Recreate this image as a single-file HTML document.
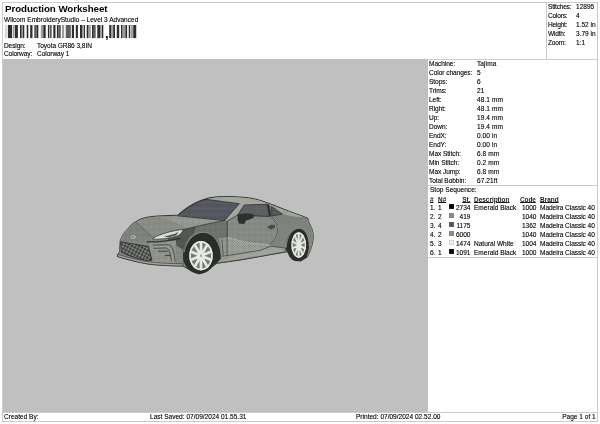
<!DOCTYPE html>
<html><head><meta charset="utf-8"><title>Production Worksheet</title>
<style>
html,body{margin:0;padding:0;background:#fff;}
body{width:600px;height:424px;position:relative;overflow:hidden;font-family:"Liberation Sans",sans-serif;color:#1a1a1a;}
.t{position:absolute;will-change:transform;text-shadow:0 0 0.5px rgba(0,0,0,0.4);-webkit-text-stroke:0.07px #1a1a1a;white-space:nowrap;font-size:6.55px;line-height:9px;height:9px;}
.h{position:absolute;background:#cbcbcb;height:1px;}
.v{position:absolute;background:#cbcbcb;width:1px;}
#title{position:absolute;will-change:transform;left:4.7px;top:2.9px;font-size:9.75px;line-height:12px;letter-spacing:-0.07px;transform-origin:0 0;font-weight:bold;color:#000;white-space:nowrap;}
#canvas{position:absolute;left:3px;top:59px;width:424.7px;height:352.9px;background:#c0c0c0;}
.sw{position:absolute;width:5.2px;height:5.2px;box-shadow:inset 0 0 0 0.5px rgba(120,120,130,0.35);}
u{text-decoration:underline;text-decoration-thickness:0.65px;text-underline-offset:0.1px;}
.b{font-weight:bold;-webkit-text-stroke:0;text-shadow:none;font-size:6.45px;}
.l{letter-spacing:-0.11px;}
.l2{letter-spacing:-0.2px;}
.l3{letter-spacing:-0.05px;}
.v3{letter-spacing:0.08px;}
.r{text-align:right;}
</style></head><body>
<!-- frame -->
<div class="h" style="left:2px;top:2px;width:596px"></div>
<div class="h" style="left:2px;top:421px;width:596px"></div>
<div class="v" style="left:2px;top:2px;height:420px"></div>
<div class="v" style="left:597px;top:2px;height:420px"></div>
<div class="v" style="left:546px;top:2px;height:57px"></div>
<div class="h" style="left:427px;top:59px;width:170px"></div>
<div class="h" style="left:427px;top:185px;width:170px"></div>
<div class="h" style="left:427px;top:257px;width:170px"></div>
<div class="h" style="left:2px;top:411.9px;width:596px"></div>

<div id="title">Production Worksheet</div>
<div class="t" style="left:4.4px;top:14.75px">Wilcom EmbroideryStudio – Level 3 Advanced</div>
<svg id="barcode" style="position:absolute;left:5px;top:25px" width="133" height="16" viewBox="0 0 133 16"><g fill="#111"><rect x="0.40" y="0" width="1.10" height="13.1" opacity="0.3"/><rect x="2.90" y="0" width="4.20" height="13.1" opacity="0.88"/><rect x="7.90" y="0" width="1.70" height="13.1" opacity="0.42"/><rect x="10.00" y="0" width="2.90" height="13.1" opacity="0.88"/><rect x="15.00" y="0" width="1.50" height="13.1" opacity="0.88"/><rect x="16.50" y="0" width="1.40" height="13.1" opacity="0.42"/><rect x="17.90" y="0" width="1.40" height="13.1" opacity="0.88"/><rect x="21.70" y="0" width="1.60" height="13.1" opacity="0.88"/><rect x="25.20" y="0" width="2.30" height="13.1" opacity="0.88"/><rect x="29.20" y="0" width="2.50" height="13.1" opacity="0.68"/><rect x="31.70" y="0" width="1.60" height="13.1" opacity="0.88"/><rect x="35.80" y="0" width="2.50" height="13.1" opacity="0.42"/><rect x="38.30" y="0" width="2.40" height="13.1" opacity="0.88"/><rect x="42.90" y="0" width="1.50" height="13.1" opacity="0.88"/><rect x="45.00" y="0" width="1.70" height="13.1" opacity="0.68"/><rect x="48.30" y="0" width="1.70" height="13.1" opacity="0.88"/><rect x="50.00" y="0" width="1.20" height="13.1" opacity="0.42"/><rect x="52.00" y="0" width="1.30" height="13.1" opacity="0.88"/><rect x="53.30" y="0" width="2.50" height="13.1" opacity="0.68"/><rect x="57.00" y="0" width="2.20" height="13.1" opacity="0.42"/><rect x="60.80" y="0" width="5.00" height="13.1" opacity="0.68"/><rect x="66.80" y="0" width="2.20" height="13.1" opacity="0.88"/><rect x="70.80" y="0" width="2.10" height="13.1" opacity="0.88"/><rect x="75.00" y="0" width="2.00" height="13.1" opacity="0.88"/><rect x="77.00" y="0" width="1.30" height="13.1" opacity="0.42"/><rect x="78.70" y="0" width="1.30" height="13.1" opacity="0.88"/><rect x="81.70" y="0" width="1.50" height="13.1" opacity="0.88"/><rect x="83.20" y="0" width="2.60" height="13.1" opacity="0.42"/><rect x="87.00" y="0" width="1.70" height="13.1" opacity="0.88"/><rect x="88.70" y="0" width="2.00" height="13.1" opacity="0.68"/><rect x="92.30" y="0" width="2.70" height="13.1" opacity="0.88"/><rect x="95.00" y="0" width="1.50" height="13.1" opacity="0.42"/><rect x="96.80" y="0" width="1.50" height="13.1" opacity="0.88"/><rect x="104.20" y="0" width="1.80" height="13.1" opacity="0.88"/><rect x="106.00" y="0" width="1.90" height="13.1" opacity="0.42"/><rect x="108.20" y="0" width="1.80" height="13.1" opacity="0.88"/><rect x="111.80" y="0" width="2.40" height="13.1" opacity="0.88"/><rect x="116.00" y="0" width="1.30" height="13.1" opacity="0.88"/><rect x="117.30" y="0" width="3.10" height="13.1" opacity="0.42"/><rect x="120.40" y="0" width="1.70" height="13.1" opacity="0.88"/><rect x="123.75" y="0" width="1.45" height="13.1" opacity="0.88"/><rect x="125.80" y="0" width="2.10" height="13.1" opacity="0.42"/><rect x="128.20" y="0" width="3.05" height="13.1" opacity="0.88"/></g><text x="99.9" y="12.6" font-family="Liberation Sans, sans-serif" font-weight="bold" font-size="13.5" fill="#111">,</text></svg>
<div class="t l" style="left:4.4px;top:40.7px">Design:</div><div class="t" style="left:37px;top:40.7px;letter-spacing:-0.05px">Toyota GR86 3,8IN</div>
<div class="t l" style="left:4.4px;top:49.2px">Colorway:</div><div class="t" style="left:37px;top:49.2px;letter-spacing:-0.05px">Colorway 1</div>

<div class="t l2" style="left:547.7px;top:2.3px" >Stitches:</div><div class="t" style="left:575.9px;top:2.3px">12895</div>
<div class="t l2" style="left:547.7px;top:11.3px" >Colors:</div><div class="t" style="left:575.9px;top:11.3px">4</div>
<div class="t l2" style="left:547.7px;top:20.3px" >Height:</div><div class="t" style="left:575.9px;top:20.3px">1.52 in</div>
<div class="t l2" style="left:547.7px;top:29.3px" >Width:</div><div class="t" style="left:575.9px;top:29.3px">3.79 in</div>
<div class="t l2" style="left:547.7px;top:38.3px" >Zoom:</div><div class="t" style="left:575.9px;top:38.3px">1:1</div>

<div id="canvas"></div>
<svg style="position:absolute;left:0;top:0" width="600" height="424" viewBox="0 0 600 424">
<defs>
<pattern id="hatch" width="1.4" height="1.4" patternUnits="userSpaceOnUse" patternTransform="rotate(45)"><rect width="0.7" height="0.7" fill="#2a2c2a" opacity="0.42"/></pattern>
<pattern id="hatch2" width="1.2" height="1.2" patternUnits="userSpaceOnUse" patternTransform="rotate(45)"><rect width="0.6" height="0.6" fill="#2a2c2a" opacity="0.30"/></pattern>
<pattern id="mesh" width="3.2" height="3.2" patternUnits="userSpaceOnUse" patternTransform="rotate(28)"><rect width="3.2" height="3.2" fill="#8a8e88"/><rect x="0.45" y="0.45" width="2.3" height="2.3" rx="0.7" fill="#343634"/></pattern>
<pattern id="glass" width="3" height="1.2" patternUnits="userSpaceOnUse"><rect width="3" height="0.5" fill="#000" opacity="0.12"/></pattern>
</defs>
<g stroke-linejoin="round" stroke-linecap="round">
<!-- body silhouette -->
<path d="M117.7,255.3 L119.7,251.5 L120.2,241 C122,235 125,231 128.3,228.5 C131,225 133,223 136.3,221.5 C139,219.5 142,218.5 145.7,217.5 C150,216.6 154,216.2 157.7,216 L177.7,215.2 C186,207.5 196,201.5 206,198.8 C208,198 209,197.8 210.5,197.6 C215,197 219,196.7 223.3,196.6 C232,196.5 241,197 248.3,197.8 C253,198.5 258,199.6 261.7,200.8 L275,205.7 L288.3,211 L297.7,214.4 L304.3,216.8 L307.9,218.4 C308.3,220 308.6,221 309,222.5 C310.8,226 312.2,229 312.8,232 C313.5,236 313.2,240 312.3,244 C311,249 309,254 307,257.3 L300,261.3 L290,252 L285.3,252 L266.7,255.3 L240,260 L216.7,263.3 L208,270 L199.3,273.9 L190,270 L183,266 L175,265.8 C165,265.6 155,265 147,263.8 C137,262 127,259.5 117.7,256.6 Z" fill="#858983" stroke="#303230" stroke-width="1"/>
<!-- roof + pillars light -->
<path d="M206,199.4 C212,197.8 219,197.2 223.3,197.1 C232,197 241,197.5 248.3,198.3 C253,199 258,200 261.7,201.2 L275,206.2 L288.3,211.5 L282.3,214 L271.7,206.5 L267,204 L244,204.8 L237.7,214.7 L227.6,221 L224.7,220.3 L239.3,203.7 Z" fill="#a3a69f"/>
<!-- hood -->
<path d="M120.5,240 C122,235 125,231 128.3,229 C131,225.5 133,223.5 136.3,222 C139,220 142,219 145.7,218 C150,217.1 154,216.7 157.7,216.5 L178,215.7 L224.7,220.3 C212,223 196,226.5 183,229.7 C172,231 162,234 153.7,237.7 C142,240.5 130,241.5 120.5,241.3 Z" fill="#90948d"/>
<path d="M120.5,240 C122,235 125,231 128.3,229 C131,225.5 133,223.5 136.3,222.3 L153.7,238 C142,240.5 130,241.5 120.5,241.3 Z" fill="#848882"/>
<path d="M160,217.5 L178,216.3 L222,220.6 C210,223 198,225.5 188,228 C180,224 170,220 160,217.5 Z" fill="#9ea19a"/>
<path d="M136.3,222.3 L153.7,238" stroke="#5a5d5a" stroke-width="0.6" fill="none"/>
<!-- front fender (near side) -->
<path d="M224.7,220.3 C212,223 196,226.5 183,229.7 L177.5,235 L166,238.3 L158,239.5 L152,247 L153,259 L175,264.5 L183,265.5 L184,250 C188,236 206,228 215,238 C220,245 221.5,255 221,262.5 L227.6,255.5 L227.6,221 Z" fill="#747873"/>
<path d="M183,229.7 L177.5,235 L166,238.3 L183,250 L186,243 C188,238 191,235 194,233.2 L196,226.6 C192,227.5 187,228.7 183,229.7 Z" fill="#565956"/>
<!-- fender lower light -->
<path d="M218,238.5 L227.6,237.5 L227.6,255.5 L221.5,258 C221.5,250 220.5,243 218,238.5 Z" fill="#9a9d96"/>
<path d="M222,240 L223.3,255" stroke="#444644" stroke-width="0.7" fill="none"/>
<!-- bumper face -->
<path d="M120.3,241.3 C130,241.5 142,240.5 153.7,238 L166,238.3 L183,250 L183,265.5 L175,265.3 C165,265 155,264.5 147,263.3 C137,261.5 127,259 117.9,256 L119.7,251.5 Z" fill="#8b8f88"/>
<path d="M149,242.3 L176,240.2 L176.5,264.3 C166,264 158,263.3 152.5,262 Z" fill="#979b94"/>
<path d="M153.3,245.2 L168.3,244.7 C172,245.2 174,249.9 175.1,261.3 M153.8,248.3 L165.7,248 C168.9,248.3 170.4,253 171.5,260.8" stroke="#3a3c3a" stroke-width="0.75" fill="none"/>
<path d="M158.5,251.2 L167.3,251.2 M165.2,255.4 L170.6,255.4" stroke="#3a3c3a" stroke-width="0.9" fill="none"/>
<path d="M153.5,246.8 L167,246.4 C170.5,247 172,252 173.2,261" stroke="#b4b7b0" stroke-width="0.9" fill="none" opacity="0.8"/>

<!-- lip -->
<path d="M117.8,254.4 C127,257.3 137,259.8 147,261.6 C155,262.8 165,263.4 175,263.6 L183,263.8 L183,266 L175,265.8 C165,265.6 155,265 147,263.8 C137,262 127,259.5 117.7,256.6 Z" fill="#a6a9a2" stroke="#303230" stroke-width="0.6"/>
<!-- grille -->
<path d="M121,241.9 L148.3,246.4 L152,260.2 L148.5,260.8 C138,259 129,256 121.7,252.6 Z" fill="url(#mesh)" stroke="#2f312f" stroke-width="0.9"/>
<!-- headlight -->
<path d="M153.5,237.9 C160,234 172,230.6 183.4,229.4 C182,233 179.5,235 177,236 C169,238.5 161,239.4 153.5,239.2 Z" fill="#e8ece4" stroke="#303230" stroke-width="0.7"/>
<path d="M164,236.8 L175,233.8 L179,231.6 L176,235.2 L168.5,237.3 Z" fill="#4e514e"/>
<path d="M147,241.9 C158,242.1 170,240.6 180,238.3" stroke="#303230" stroke-width="1.2" fill="none"/>
<!-- emblem -->
<ellipse cx="133" cy="237" rx="2" ry="1.7" fill="#8b8f89" stroke="#d4d8d0" stroke-width="0.7"/>
<!-- hood near edge line -->
<path d="M183.2,229.6 C196,226.5 212,223 224.7,220.4" stroke="#3f413f" stroke-width="0.8" fill="none"/>
<!-- door -->
<path d="M227.6,221 L237.7,214.9 L269.7,216.2 C274,219 277,223 277.7,230 C277.6,235 275,239.5 271,243.3 L260,250.3 L240,253.7 L227.6,255.5 Z" fill="#8d918b" stroke="#303230" stroke-width="0.7"/>
<path d="M227.6,237.6 L250,243 L271,245 L260,250.3 L240,253.7 L227.6,255.5 Z" fill="#a1a49d"/>
<path d="M227.6,237.6 L250,243 L271,245" stroke="#d9dcd5" stroke-width="0.5" stroke-dasharray="1.6 1.1" fill="none"/>
<!-- rear fender -->
<path d="M269.7,216.2 L272.3,216 L282.3,214 L288.3,211.3 L297.7,214.8 L304.3,217.2 L307.7,218.8 C308.3,220 308.6,221 309,222.5 C310.8,226 312.2,229 312.8,232 C313.5,236 313.2,240 312.3,244 C311,249 309,254 307,257.3 L290,251.5 L285.3,251.5 L271,246.5 L271,243.3 C275,239.5 277.6,235 277.7,230 C277,223 274,219 269.7,216.2 Z" fill="#858983"/>
<!-- skirt -->
<path d="M218,256.6 L227.6,255.5 L240,253.7 L260,250.3 L271,246.3 L285.3,248 L285.3,251.8 L266.7,255.2 L240,259.8 L216.7,263.2 Z" fill="#a0a39c" stroke="#303230" stroke-width="0.6"/>
<!-- textures -->
<path d="M269.7,216.2 L288.3,211.3 L307.7,218.8 C312,228 313.5,240 306.7,257 L285.3,251.5 L271,246 C278,238 279,224 269.7,216.2 Z" fill="url(#hatch)"/>
<path d="M120.5,240 C125,230 135,220 157.7,216.5 L178,215.7 L224.7,220.3 L227.6,221 L237.7,214.9 L269.7,216.2 C279,224 278,238 271,246 L240,253.7 L221,262 L183,265.5 L117.9,256 Z" fill="url(#hatch2)"/>
<path d="M282.3,214 L288.3,211.5 L297.7,214.9 L304.3,217.3 L296,216.8 L289,215.6 Z" fill="#a3a69f"/>
<!-- windshield -->
<path d="M178,215.6 C186,208 196,202 206,199.3 L239.3,203.7 L224.7,220.3 Z" fill="#5a5c64" stroke="#303230" stroke-width="0.8"/>
<path d="M178,215.6 C186,208 196,202 206,199.3 L239.3,203.7 L224.7,220.3 Z" fill="url(#glass)"/>
<!-- side windows -->
<path d="M237.7,214.9 L244.3,205 L267.3,204.3 L269.5,216 Z" fill="#5d5f66" stroke="#303230" stroke-width="0.8"/>
<path d="M271.7,206.7 L282.3,214 L272.3,216 Z" fill="#56585f" stroke="#303230" stroke-width="0.8"/>
<path d="M267.3,204.3 L269.2,204.9 L271.2,216 L269.5,216 Z" fill="#2f312f" stroke="#2f312f" stroke-width="0.6"/>
<!-- mirror -->
<path d="M237.7,215.3 C239,213.8 246,213 252.3,214 C253.8,214.8 254,216.8 253.5,218 L245.7,220.7 L244.4,224 L239,223.4 L237.6,219.5 Z" fill="#2e302e"/>
<!-- handle -->
<path d="M267,226.8 L271.5,224.8 L275,225 L275,228 L270.5,229.4 Z" fill="#4a4c4a"/>
<!-- front wheel -->
<path d="M183.5,262 C182,246 192,232.5 203,232.2 C213,232 221,242 221.3,258 L218,262 L207,270 L199.3,273.9 L190,270 Z" fill="#2b2d2b"/>
<ellipse cx="199.3" cy="255.3" rx="16.2" ry="18.6" fill="#2b2d2b"/>
<path d="M184,252 C187,238 196,232 204,232.3 C214,233 221,243 221.3,258" stroke="#8d918b" stroke-width="0.9" fill="none"/>
<ellipse cx="201" cy="255.7" rx="11.7" ry="14.7" fill="#777b76"/>
<g stroke="#e6ebe2" stroke-width="2.7" stroke-linecap="butt">
<path d="M201,255.7 L201,241.5 M201,255.7 L201,270 M201,255.7 L190,251.2 M201,255.7 L212,251.2 M201,255.7 L190,260.2 M201,255.7 L212,260.2 M201,255.7 L194.2,243.8 M201,255.7 L207.8,243.8 M201,255.7 L194.2,267.6 M201,255.7 L207.8,267.6"/>
</g>
<ellipse cx="201" cy="255.7" rx="10.9" ry="13.9" fill="none" stroke="#e6ebe2" stroke-width="1.7"/>
<ellipse cx="201" cy="255.7" rx="2.6" ry="3.2" fill="#e6ebe2"/>
<ellipse cx="201" cy="255.7" rx="1" ry="1.3" fill="#9a9e98"/>
<!-- rear wheel -->
<path d="M286,250 C286,238 292,228.5 299,228.3 C305,228.3 309.5,236 309,248 L306.7,257 L300,261.3 L290,254 Z" fill="#2b2d2b"/>
<ellipse cx="297.3" cy="245.6" rx="11" ry="15.6" fill="#2b2d2b"/>
<path d="M286.2,247 C287,236 292,228.6 299,228.3 C305,228.3 309.5,236 309.3,246" stroke="#8d918b" stroke-width="0.8" fill="none"/>
<ellipse cx="298.7" cy="245" rx="7.3" ry="12.7" fill="#777b76"/>
<g stroke="#e6ebe2" stroke-width="1.9" stroke-linecap="butt">
<path d="M298.7,245 L298.7,232.8 M298.7,245 L298.7,257.2 M298.7,245 L291.8,241.2 M298.7,245 L305.6,241.2 M298.7,245 L291.8,248.8 M298.7,245 L305.6,248.8 M298.7,245 L294.5,234.8 M298.7,245 L302.9,234.8 M298.7,245 L294.5,255.2 M298.7,245 L302.9,255.2"/>
</g>
<ellipse cx="298.7" cy="245" rx="6.7" ry="12" fill="none" stroke="#e6ebe2" stroke-width="1.4"/>
<ellipse cx="298.7" cy="245" rx="1.8" ry="2.8" fill="#e6ebe2"/>
</g>
</svg>


<div class="t l3" style="left:429.4px;top:58.75px;">Machine:</div>
<div class="t v3" style="left:477.3px;top:58.75px;">Tajima</div>
<div class="t l3" style="left:429.4px;top:67.75px;">Color changes:</div>
<div class="t v3" style="left:477.3px;top:67.75px;">5</div>
<div class="t l3" style="left:429.4px;top:76.75px;">Stops:</div>
<div class="t v3" style="left:477.3px;top:76.75px;">6</div>
<div class="t l3" style="left:429.4px;top:85.75px;">Trims:</div>
<div class="t v3" style="left:477.3px;top:85.75px;">21</div>
<div class="t l3" style="left:429.4px;top:94.75px;">Left:</div>
<div class="t v3" style="left:477.3px;top:94.75px;">48.1 mm</div>
<div class="t l3" style="left:429.4px;top:103.75px;">Right:</div>
<div class="t v3" style="left:477.3px;top:103.75px;">48.1 mm</div>
<div class="t l3" style="left:429.4px;top:112.75px;">Up:</div>
<div class="t v3" style="left:477.3px;top:112.75px;">19.4 mm</div>
<div class="t l3" style="left:429.4px;top:121.75px;">Down:</div>
<div class="t v3" style="left:477.3px;top:121.75px;">19.4 mm</div>
<div class="t l3" style="left:429.4px;top:130.75px;">EndX:</div>
<div class="t v3" style="left:477.3px;top:130.75px;">0.00 in</div>
<div class="t l3" style="left:429.4px;top:139.75px;">EndY:</div>
<div class="t v3" style="left:477.3px;top:139.75px;">0.00 in</div>
<div class="t l3" style="left:429.4px;top:148.75px;">Max Stitch:</div>
<div class="t v3" style="left:477.3px;top:148.75px;">6.8 mm</div>
<div class="t l3" style="left:429.4px;top:157.75px;">Min Stitch:</div>
<div class="t v3" style="left:477.3px;top:157.75px;">0.2 mm</div>
<div class="t l3" style="left:429.4px;top:166.75px;">Max Jump:</div>
<div class="t v3" style="left:477.3px;top:166.75px;">6.8 mm</div>
<div class="t l3" style="left:429.4px;top:175.75px;">Total Bobbin:</div>
<div class="t v3" style="left:477.3px;top:175.75px;">67.21ft</div>
<div class="t " style="left:429.5px;top:184.7px;">Stop Sequence:</div>
<div class="t b" style="left:429.5px;top:194.6px;"><u>#</u></div>
<div class="t b" style="left:438px;top:194.6px;"><u>N#</u></div>
<div class="t b r" style="left:440px;top:194.6px;width:30.5px"><u>St.</u></div>
<div class="t b" style="left:474px;top:194.6px;"><u>Description</u></div>
<div class="t b" style="left:520.2px;top:194.6px;letter-spacing:-0.08px"><u>Code</u></div>
<div class="t b" style="left:539.7px;top:194.6px;"><u>Brand</u></div>
<div class="t " style="left:429.5px;top:203.0px;">1.</div>
<div class="t " style="left:438px;top:203.0px;">1</div>
<div class="sw" style="left:449px;top:203.90px;background:#000000"></div>
<div class="t r" style="left:440px;top:203.0px;width:30.5px">2734</div>
<div class="t " style="left:474px;top:203.0px;">Emerald Black</div>
<div class="t r" style="left:506px;top:203.0px;width:30.5px">1000</div>
<div class="t " style="left:539.8px;top:203.0px;letter-spacing:-0.05px">Madeira Classic 40</div>
<div class="t " style="left:429.5px;top:212.0px;">2.</div>
<div class="t " style="left:438px;top:212.0px;">2</div>
<div class="sw" style="left:449px;top:212.90px;background:#8a8a8a"></div>
<div class="t r" style="left:440px;top:212.0px;width:30.5px">419</div>
<div class="t r" style="left:506px;top:212.0px;width:30.5px">1040</div>
<div class="t " style="left:539.8px;top:212.0px;letter-spacing:-0.05px">Madeira Classic 40</div>
<div class="t " style="left:429.5px;top:221.0px;">3.</div>
<div class="t " style="left:438px;top:221.0px;">4</div>
<div class="sw" style="left:449px;top:221.90px;background:#5a506e"></div>
<div class="t r" style="left:440px;top:221.0px;width:30.5px">1175</div>
<div class="t r" style="left:506px;top:221.0px;width:30.5px">1362</div>
<div class="t " style="left:539.8px;top:221.0px;letter-spacing:-0.05px">Madeira Classic 40</div>
<div class="t " style="left:429.5px;top:230.0px;">4.</div>
<div class="t " style="left:438px;top:230.0px;">2</div>
<div class="sw" style="left:449px;top:230.90px;background:#8a8a8a"></div>
<div class="t r" style="left:440px;top:230.0px;width:30.5px">6000</div>
<div class="t r" style="left:506px;top:230.0px;width:30.5px">1040</div>
<div class="t " style="left:539.8px;top:230.0px;letter-spacing:-0.05px">Madeira Classic 40</div>
<div class="t " style="left:429.5px;top:239.0px;">5.</div>
<div class="t " style="left:438px;top:239.0px;">3</div>
<div class="sw" style="left:449px;top:239.90px;background:#ececf4"></div>
<div class="t r" style="left:440px;top:239.0px;width:30.5px">1474</div>
<div class="t " style="left:474px;top:239.0px;">Natural White</div>
<div class="t r" style="left:506px;top:239.0px;width:30.5px">1004</div>
<div class="t " style="left:539.8px;top:239.0px;letter-spacing:-0.05px">Madeira Classic 40</div>
<div class="t " style="left:429.5px;top:248.0px;">6.</div>
<div class="t " style="left:438px;top:248.0px;">1</div>
<div class="sw" style="left:449px;top:248.90px;background:#000000"></div>
<div class="t r" style="left:440px;top:248.0px;width:30.5px">1091</div>
<div class="t " style="left:474px;top:248.0px;">Emerald Black</div>
<div class="t r" style="left:506px;top:248.0px;width:30.5px">1000</div>
<div class="t " style="left:539.8px;top:248.0px;letter-spacing:-0.05px">Madeira Classic 40</div>

<div class="t" style="left:4.4px;top:412.1px">Created By:</div>
<div class="t" style="left:150px;top:412.1px">Last Saved: 07/09/2024 01.55.31</div>
<div class="t" style="left:356.4px;top:412.1px">Printed: 07/09/2024 02.52.00</div>
<div class="t r" style="left:500px;width:95.7px;top:412.1px">Page 1 of 1</div>
</body></html>
